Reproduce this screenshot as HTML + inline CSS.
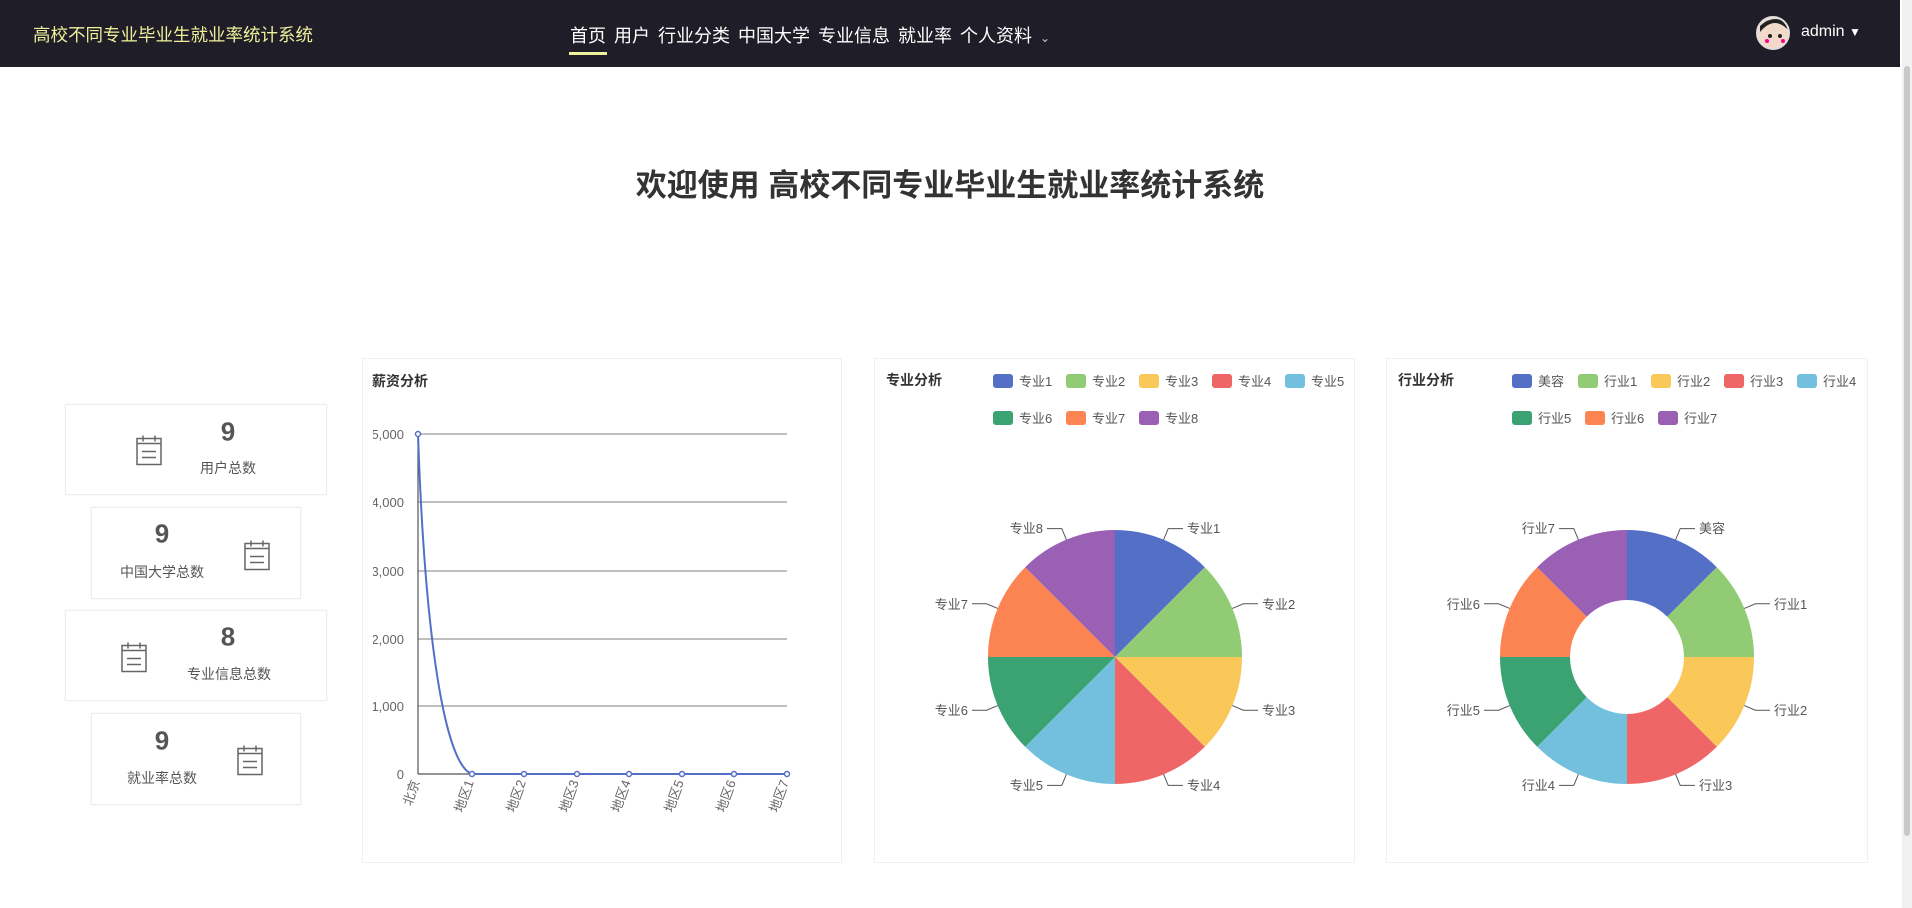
<!DOCTYPE html>
<html><head><meta charset="utf-8">
<style>
*{margin:0;padding:0;box-sizing:border-box}
body{width:1912px;height:908px;overflow:hidden;background:#fff;font-family:"Liberation Sans","Noto Sans CJK SC",sans-serif;position:relative}
.nav{position:absolute;left:0;top:0;width:1900px;height:67px;background:#1f1e28}
.logo{position:absolute;left:33px;top:22px;font-size:17.5px;color:#eef09a}
.menu{position:absolute;left:570px;top:22px;font-size:18px;color:#fff;white-space:nowrap}
.menu span{margin-right:8px}
.ul{position:absolute;left:569px;top:52px;width:38px;height:3px;background:#eef09a}
.av{position:absolute;left:1756px;top:16px;width:34px;height:34px;border-radius:50%;background:#fff;border:2px solid #ddd;overflow:hidden}
.admin{position:absolute;left:1801px;top:23px;color:#fff;font-size:16px}
.sb{position:absolute;left:1902px;top:0;width:10px;height:908px;background:#f1f1f1}
.sb div{position:absolute;left:2px;top:66px;width:6px;height:770px;background:#c8c8c8;border-radius:3px}
h1{position:absolute;left:0;width:1900px;top:160px;text-align:center;font-size:31px;color:#333;font-weight:bold}
.card{position:absolute;border:1px solid #eee;box-shadow:0 0 3px rgba(0,0,0,.05);background:#fff}
.num{position:absolute;font-size:26px;font-weight:bold;color:#555;transform:translate(-50%,-50%)}
.lab{position:absolute;font-size:14px;color:#555;transform:translate(-50%,-50%);white-space:nowrap}
.ic{position:absolute;transform:translate(-50%,-50%)}
.chart{position:absolute;border:1px solid #f0f0f0;background:#fff;overflow:hidden}
</style></head><body>
<div class="nav">
<div class="logo">高校不同专业毕业生就业率统计系统</div>
<div class="menu"><span>首页</span><span>用户</span><span>行业分类</span><span>中国大学</span><span>专业信息</span><span>就业率</span><span>个人资料</span><span style="font-size:12px;color:#ccc">⌄</span></div>
<div class="ul"></div>
<div class="av"><svg width="34" height="34"><rect width="34" height="34" fill="#f3d9c9"/><path d="M2 14 Q17 -4 32 14 L32 8 Q17 -6 2 8Z" fill="#222"/><circle cx="12" cy="18" r="2" fill="#222"/><circle cx="22" cy="18" r="2" fill="#222"/><circle cx="9" cy="23" r="2" fill="#f08"/><circle cx="25" cy="23" r="2" fill="#f08"/></svg></div>
<div class="admin">admin <span style="font-size:12px">▼</span></div>
</div>
<div class="sb"><div></div></div>
<h1>欢迎使用 高校不同专业毕业生就业率统计系统</h1>

<svg width="0" height="0" style="position:absolute"><defs><g id="cal"><rect x="1" y="4" width="24" height="26" fill="none" stroke="#666" stroke-width="1.5"/><line x1="1" y1="9" x2="25" y2="9" stroke="#666" stroke-width="1.5"/><line x1="7" y1="1" x2="7" y2="7" stroke="#666" stroke-width="1.5"/><line x1="19" y1="1" x2="19" y2="7" stroke="#666" stroke-width="1.5"/><line x1="6" y1="17" x2="20" y2="17" stroke="#666" stroke-width="1.5"/><line x1="6" y1="23" x2="20" y2="23" stroke="#666" stroke-width="1.5"/></g></defs></svg>

<div class="card" style="left:65px;top:404px;width:262px;height:91px"></div>
<div class="card" style="left:91px;top:507px;width:210px;height:92px"></div>
<div class="card" style="left:65px;top:610px;width:262px;height:91px"></div>
<div class="card" style="left:91px;top:713px;width:210px;height:92px"></div>

<svg class="ic" style="left:149px;top:450px" width="26" height="31"><use href="#cal"/></svg>
<div class="num" style="left:228px;top:432px">9</div><div class="lab" style="left:228px;top:468px">用户总数</div>
<svg class="ic" style="left:257px;top:555px" width="26" height="31"><use href="#cal"/></svg>
<div class="num" style="left:162px;top:534px">9</div><div class="lab" style="left:162px;top:572px">中国大学总数</div>
<svg class="ic" style="left:134px;top:657px" width="26" height="31"><use href="#cal"/></svg>
<div class="num" style="left:228px;top:637px">8</div><div class="lab" style="left:229px;top:674px">专业信息总数</div>
<svg class="ic" style="left:250px;top:760px" width="26" height="31"><use href="#cal"/></svg>
<div class="num" style="left:162px;top:741px">9</div><div class="lab" style="left:162px;top:778px">就业率总数</div>

<div class="chart" style="left:362px;top:358px;width:480px;height:505px"></div>
<div class="chart" style="left:874px;top:358px;width:481px;height:505px"></div>
<div class="chart" style="left:1386px;top:358px;width:482px;height:505px"></div>

<svg style="position:absolute;left:0;top:0" width="1900" height="908" font-family="Liberation Sans, Noto Sans CJK SC, sans-serif">
<defs><clipPath id="c1"><rect x="373" y="358" width="465" height="505"/></clipPath></defs>
<text x="372" y="386" font-size="14" font-weight="bold" fill="#333">薪资分析</text>
<g stroke="#999" stroke-width="1.2">
<line x1="418" y1="434" x2="787" y2="434"/><line x1="418" y1="502" x2="787" y2="502"/><line x1="418" y1="571" x2="787" y2="571"/><line x1="418" y1="639" x2="787" y2="639"/><line x1="418" y1="706" x2="787" y2="706"/>
<line x1="418" y1="774" x2="787" y2="774" stroke="#555"/><line x1="418" y1="434" x2="418" y2="774" stroke="#555"/>
</g>
<g clip-path="url(#c1)" font-size="13" fill="#666" text-anchor="end">
<text x="404" y="439">5,000</text><text x="404" y="507">4,000</text><text x="404" y="576">3,000</text><text x="404" y="644">2,000</text><text x="404" y="711">1,000</text><text x="404" y="779">0</text>
</g>
<path d="M418 434 C425 640 445 765 472 774 L787 774" fill="none" stroke="#5470c6" stroke-width="2"/>
<g fill="#fff" stroke="#5470c6" stroke-width="1.5"><circle cx="418" cy="434" r="2.5"/><circle cx="472" cy="774" r="2.5"/><circle cx="524" cy="774" r="2.5"/><circle cx="577" cy="774" r="2.5"/><circle cx="629" cy="774" r="2.5"/><circle cx="682" cy="774" r="2.5"/><circle cx="734" cy="774" r="2.5"/><circle cx="787" cy="774" r="2.5"/></g>
<g font-size="13" fill="#666" text-anchor="end">
<text transform="translate(420,782) rotate(-70)">北京</text>
<text transform="translate(474,782) rotate(-70)">地区1</text>
<text transform="translate(526,782) rotate(-70)">地区2</text>
<text transform="translate(579,782) rotate(-70)">地区3</text>
<text transform="translate(631,782) rotate(-70)">地区4</text>
<text transform="translate(684,782) rotate(-70)">地区5</text>
<text transform="translate(736,782) rotate(-70)">地区6</text>
<text transform="translate(789,782) rotate(-70)">地区7</text>
</g>

<g id="p1">
<path d="M1115 657 L1115 530 A127 127 0 0 1 1204.8 567.2Z" fill="#5470c6"/>
<path d="M1115 657 L1204.8 567.2 A127 127 0 0 1 1242 657Z" fill="#91cc75"/>
<path d="M1115 657 L1242 657 A127 127 0 0 1 1204.8 746.8Z" fill="#fac858"/>
<path d="M1115 657 L1204.8 746.8 A127 127 0 0 1 1115 784Z" fill="#ee6666"/>
<path d="M1115 657 L1115 784 A127 127 0 0 1 1025.2 746.8Z" fill="#73c0de"/>
<path d="M1115 657 L1025.2 746.8 A127 127 0 0 1 988 657Z" fill="#3ba272"/>
<path d="M1115 657 L988 657 A127 127 0 0 1 1025.2 567.2Z" fill="#fc8452"/>
<path d="M1115 657 L1025.2 567.2 A127 127 0 0 1 1115 530Z" fill="#9a60b4"/>
<g fill="none" stroke="#555" stroke-width="1">
<path d="M1163.6 539.7 L1168.2 528.6 H1183"/><path d="M1232.3 608.4 L1243.4 603.8 H1258"/><path d="M1232.3 705.6 L1243.4 710.2 H1258"/><path d="M1163.6 774.3 L1168.2 785.4 H1183"/>
<path d="M1066.4 774.3 L1061.8 785.4 H1047"/><path d="M997.7 705.6 L986.6 710.2 H972"/><path d="M997.7 608.4 L986.6 603.8 H972"/><path d="M1066.4 539.7 L1061.8 528.6 H1047"/>
</g>
</g>
<g font-size="13" fill="#555">
<text x="1187" y="533">专业1</text><text x="1262" y="609">专业2</text><text x="1262" y="715">专业3</text><text x="1187" y="790">专业4</text>
<g text-anchor="end"><text x="1043" y="790">专业5</text><text x="968" y="715">专业6</text><text x="968" y="609">专业7</text><text x="1043" y="533">专业8</text></g>
</g>
<g transform="translate(512,0)">
<use href="#p1"/>
</g>
<circle cx="1627" cy="657" r="57" fill="#fff"/>
<g font-size="13" fill="#555">
<text x="1699" y="533">美容</text><text x="1774" y="609">行业1</text><text x="1774" y="715">行业2</text><text x="1699" y="790">行业3</text>
<g text-anchor="end"><text x="1555" y="790">行业4</text><text x="1480" y="715">行业5</text><text x="1480" y="609">行业6</text><text x="1555" y="533">行业7</text></g>
</g>

<text x="886" y="385" font-size="14" font-weight="bold" fill="#333">专业分析</text>
<g font-size="13" fill="#555">
<rect x="993" y="374" width="20" height="14" rx="3" fill="#5470c6"/><text x="1019" y="386">专业1</text>
<rect x="1066" y="374" width="20" height="14" rx="3" fill="#91cc75"/><text x="1092" y="386">专业2</text>
<rect x="1139" y="374" width="20" height="14" rx="3" fill="#fac858"/><text x="1165" y="386">专业3</text>
<rect x="1212" y="374" width="20" height="14" rx="3" fill="#ee6666"/><text x="1238" y="386">专业4</text>
<rect x="1285" y="374" width="20" height="14" rx="3" fill="#73c0de"/><text x="1311" y="386">专业5</text>
<rect x="993" y="411" width="20" height="14" rx="3" fill="#3ba272"/><text x="1019" y="423">专业6</text>
<rect x="1066" y="411" width="20" height="14" rx="3" fill="#fc8452"/><text x="1092" y="423">专业7</text>
<rect x="1139" y="411" width="20" height="14" rx="3" fill="#9a60b4"/><text x="1165" y="423">专业8</text>
</g>
<text x="1398" y="385" font-size="14" font-weight="bold" fill="#333">行业分析</text>
<g font-size="13" fill="#555">
<rect x="1512" y="374" width="20" height="14" rx="3" fill="#5470c6"/><text x="1538" y="386">美容</text>
<rect x="1578" y="374" width="20" height="14" rx="3" fill="#91cc75"/><text x="1604" y="386">行业1</text>
<rect x="1651" y="374" width="20" height="14" rx="3" fill="#fac858"/><text x="1677" y="386">行业2</text>
<rect x="1724" y="374" width="20" height="14" rx="3" fill="#ee6666"/><text x="1750" y="386">行业3</text>
<rect x="1797" y="374" width="20" height="14" rx="3" fill="#73c0de"/><text x="1823" y="386">行业4</text>
<rect x="1512" y="411" width="20" height="14" rx="3" fill="#3ba272"/><text x="1538" y="423">行业5</text>
<rect x="1585" y="411" width="20" height="14" rx="3" fill="#fc8452"/><text x="1611" y="423">行业6</text>
<rect x="1658" y="411" width="20" height="14" rx="3" fill="#9a60b4"/><text x="1684" y="423">行业7</text>
</g>
</svg>
</body></html>
